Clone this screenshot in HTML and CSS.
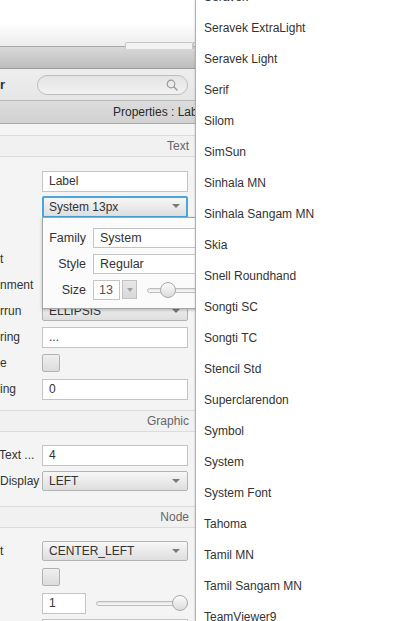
FILE: index.html
```html
<!DOCTYPE html>
<html>
<head>
<meta charset="utf-8">
<link rel="stylesheet" href="styles.css">
</head>
<body>
<div class="screen">
  <div class="inspector">
    <div class="topwin"><div class="tab"></div><div class="tab2"></div></div>
    <div class="toolbar"></div>
    <div class="searchrow">
      <span class="title">r</span>
      <div class="search">
        <svg width="12" height="12" viewBox="0 0 12 12"><circle cx="5" cy="5" r="3.8" fill="none" stroke="#9a9a9a" stroke-width="1.2"/><line x1="7.8" y1="7.8" x2="11" y2="11" stroke="#9a9a9a" stroke-width="1.4" stroke-linecap="round"/></svg>
      </div>
    </div>
    <div class="propbar"><span class="proptext">Properties : Lab</span></div>
    <div class="spacer"></div>

    <div class="section-head">Text</div>
    <div class="rows text-rows">
      <div class="row"><span class="lbl"></span><div class="field">Label</div></div>
      <div class="row"><span class="lbl"></span><div class="combo focus">System 13px<i class="arrow"></i></div></div>
      <div class="row"><span class="lbl"></span><div class="field"></div></div>
      <div class="row"><span class="lbl">t</span><div class="combo"><i class="arrow"></i></div></div>
      <div class="row"><span class="lbl">nment</span><div class="combo"><i class="arrow"></i></div></div>
      <div class="row"><span class="lbl">rrun</span><div class="combo">ELLIPSIS<i class="arrow"></i></div></div>
      <div class="row"><span class="lbl">ring</span><div class="field dots">...</div></div>
      <div class="row"><span class="lbl">e</span><div class="check"></div></div>
      <div class="row"><span class="lbl">ing</span><div class="field">0</div></div>
    </div>

    <div class="section-head">Graphic</div>
    <div class="rows graphic-rows">
      <div class="row"><span class="lbl shift">Text ...</span><div class="field">4</div></div>
      <div class="row"><span class="lbl">Display</span><div class="combo">LEFT<i class="arrow"></i></div></div>
    </div>

    <div class="section-head">Node</div>
    <div class="rows">
      <div class="row"><span class="lbl">t</span><div class="combo">CENTER_LEFT<i class="arrow"></i></div></div>
      <div class="row"><span class="lbl"></span><div class="check"></div></div>
      <div class="row"><span class="lbl"></span><div class="field small">1</div><div class="slider"><div class="track"></div><div class="thumb end"></div></div></div>
      <div class="row"><span class="lbl"></span><div class="field"></div></div>
    </div>

    <div class="font-popup">
      <div class="prow"><span class="plbl">Family</span><div class="pfield">System</div></div>
      <div class="prow"><span class="plbl">Style</span><div class="pfield">Regular</div></div>
      <div class="prow"><span class="plbl">Size</span><div class="pfield size">13</div><div class="spin"><i class="arrow"></i></div><div class="pslider"><div class="track"></div><div class="thumb"></div></div></div>
    </div>
  </div>

  <div class="fontlist">
    <div class="item">Seravek</div>
    <div class="item">Seravek ExtraLight</div>
    <div class="item">Seravek Light</div>
    <div class="item">Serif</div>
    <div class="item">Silom</div>
    <div class="item">SimSun</div>
    <div class="item">Sinhala MN</div>
    <div class="item">Sinhala Sangam MN</div>
    <div class="item">Skia</div>
    <div class="item">Snell Roundhand</div>
    <div class="item">Songti SC</div>
    <div class="item">Songti TC</div>
    <div class="item">Stencil Std</div>
    <div class="item">Superclarendon</div>
    <div class="item">Symbol</div>
    <div class="item">System</div>
    <div class="item">System Font</div>
    <div class="item">Tahoma</div>
    <div class="item">Tamil MN</div>
    <div class="item">Tamil Sangam MN</div>
    <div class="item">TeamViewer9</div>
  </div>
</div>
</body>
</html>
```

FILE: styles.css
```css
html, body {
  margin: 0;
  padding: 0;
}
body {
  width: 400px;
  height: 621px;
  overflow: hidden;
  font-family: "Liberation Sans", "DejaVu Sans", sans-serif;
  font-size: 12px;
  color: #333;
  background: #f4f4f4;
}
.screen {
  display: flex;
  width: 400px;
  height: 621px;
  overflow: hidden;
}
.inspector {
  position: relative;
  width: 195px;
  flex: none;
  height: 621px;
  overflow: hidden;
  background: #f4f4f4;
  border-right: 1px solid #c9c9c9;
}
.topwin {
  position: relative;
  height: 46px;
  background: linear-gradient(#ffffff 0, #ffffff 22px, #ededed 46px);
  border-bottom: 1px solid #a9a9a9;
}
.tab {
  position: absolute;
  left: 125px;
  top: 42px;
  width: 66px;
  height: 6px;
  border: 1px solid #c6c6c6;
  border-bottom: none;
  border-radius: 2px 2px 0 0;
  background: #f2f2f2;
}
.tab2 {
  position: absolute;
  left: 193px;
  top: 42px;
  width: 6px;
  height: 6px;
  border-left: 1px solid #c6c6c6;
  border-top: 1px solid #c6c6c6;
}
.toolbar {
  height: 21px;
  background: linear-gradient(#d9d9d9, #bdbdbd);
  border-bottom: 1px solid #9b9b9b;
}
.searchrow {
  display: flex;
  align-items: center;
  height: 31px;
  background: linear-gradient(#eeeeee, #e6e6e6);
  border-bottom: 1px solid #b9b9b9;
}
.title {
  width: 37px;
  flex: none;
  font-weight: bold;
  font-size: 13px;
  color: #333;
}
.search {
  width: 151px;
  height: 20px;
  box-sizing: border-box;
  border: 1px solid #bdbdbd;
  border-radius: 10px;
  background: linear-gradient(#e4e4e4, #f2f2f2);
  display: flex;
  align-items: center;
  justify-content: flex-end;
  padding-right: 9px;
}
.propbar {
  height: 22px;
  background: linear-gradient(#dcdcdc, #d2d2d2);
  border-bottom: 1px solid #a8a8a8;
  display: flex;
  align-items: center;
  padding-left: 113px;
  white-space: nowrap;
  font-size: 12px;
  color: #2a2a2a;
}
.proptext {
  overflow: hidden;
}
.spacer {
  height: 11px;
  background: #f5f5f5;
}
.section-head {
  height: 20px;
  line-height: 20px;
  text-align: right;
  padding-right: 6px;
  border-top: 1px solid #dcdcdc;
  border-bottom: 1px solid #dcdcdc;
  background: #f1f1f1;
  color: #666;
  font-size: 12px;
}
.rows {
  padding: 10px 0;
}
.text-rows {
  padding-top: 11px;
  padding-bottom: 8px;
}
.graphic-rows {
  padding-bottom: 12px;
}
.row {
  display: flex;
  align-items: center;
  height: 26px;
}
.lbl {
  width: 42px;
  flex: none;
  overflow: hidden;
  white-space: nowrap;
  font-size: 12px;
  color: #333;
}
.lbl.shift {
  text-indent: -1px;
}
.field {
  width: 146px;
  height: 21px;
  box-sizing: border-box;
  border: 1px solid #c4c4c4;
  background: #fff;
  padding-left: 6px;
  line-height: 19px;
  font-size: 12px;
  color: #333;
}
.field.small {
  width: 44px;
  flex: none;
}
.combo {
  position: relative;
  width: 146px;
  height: 20px;
  box-sizing: border-box;
  border: 1px solid #b3b3b3;
  border-radius: 2px;
  background: linear-gradient(#f7f7f7, #dedede);
  padding-left: 6px;
  line-height: 18px;
  font-size: 12px;
  color: #333;
}
.combo.focus {
  border: 2px solid #4aa5dc;
  padding-left: 5px;
  height: 22px;
  line-height: 18px;
}
.arrow {
  position: absolute;
  right: 7px;
  top: 7px;
  width: 0;
  height: 0;
  border-left: 4px solid transparent;
  border-right: 4px solid transparent;
  border-top: 4px solid #7a7a7a;
}
.combo.focus .arrow {
  right: 6px;
  top: 6px;
}
.check {
  width: 18px;
  height: 18px;
  box-sizing: border-box;
  border: 1px solid #b2b2b2;
  border-radius: 2px;
  background: linear-gradient(#efefef, #dcdcdc);
}
.slider {
  position: relative;
  width: 92px;
  height: 18px;
  margin-left: 10px;
}
.track {
  position: absolute;
  left: 0;
  right: 0;
  top: 7px;
  height: 5px;
  box-sizing: border-box;
  border: 1px solid #bcbcbc;
  border-radius: 3px;
  background: linear-gradient(#e2e2e2, #fafafa);
}
.thumb {
  position: absolute;
  top: 1px;
  width: 16px;
  height: 16px;
  box-sizing: border-box;
  border: 1px solid #a9a9a9;
  border-radius: 50%;
  background: linear-gradient(#fbfbfb, #dcdcdc);
}
.thumb.end {
  right: 0;
}
.font-popup {
  position: absolute;
  left: 42px;
  top: 217px;
  width: 170px;
  height: 92px;
  box-sizing: border-box;
  border: 1px solid #a6a6a6;
  background: #fbfbfb;
  box-shadow: 0 1px 3px rgba(0,0,0,0.25);
  padding-top: 10px;
  display: flex;
  flex-direction: column;
  gap: 7px;
}
.prow {
  display: flex;
  align-items: center;
  height: 19px;
}
.plbl {
  width: 43px;
  text-align: right;
  flex: none;
  font-size: 12.5px;
  color: #333;
}
.pfield {
  margin-left: 7px;
  width: 120px;
  height: 20px;
  box-sizing: border-box;
  border: 1px solid #c4c4c4;
  background: #fff;
  padding-left: 6px;
  line-height: 18px;
  font-size: 12.5px;
  color: #333;
}
.pfield.size {
  width: 27px;
  flex: none;
  color: #555;
  padding-left: 5px;
}
.spin {
  position: relative;
  width: 15px;
  height: 19px;
  margin-left: 2px;
  box-sizing: border-box;
  border: 1px solid #c2c2c2;
  background: linear-gradient(#e8e8e8, #d8d8d8);
}
.spin .arrow {
  right: 3px;
  top: 7px;
  border-left-width: 3.5px;
  border-right-width: 3.5px;
  border-top: 4px solid #a0a0a0;
}
.pslider {
  position: relative;
  width: 60px;
  height: 18px;
  margin-left: 10px;
}
.pslider .thumb {
  left: 13px;
}
.fontlist {
  position: relative;
  flex: 1;
  height: 621px;
  background: #fff;
  box-shadow: -1px 0 2px rgba(0,0,0,0.18);
  overflow: hidden;
  z-index: 2;
}
.item {
  height: 31px;
  line-height: 31px;
  padding-left: 8px;
  white-space: nowrap;
  font-size: 12px;
  color: #333;
}
.item:first-child {
  margin-top: -18px;
}
```
